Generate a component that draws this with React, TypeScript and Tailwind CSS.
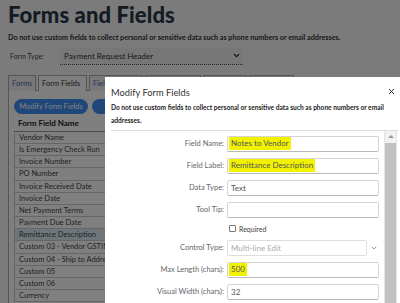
import React from 'react';
import { X, ChevronDown } from 'lucide-react';

const rows = [
  'Vendor Name',
  'Is Emergency Check Run',
  'Invoice Number',
  'PO Number',
  'Invoice Received Date',
  'Invoice Date',
  'Net Payment Terms',
  'Payment Due Date',
  'Remittance Description',
  'Custom 03 - Vendor GSTIN',
  'Custom 04 - Ship to Address',
  'Custom 05',
  'Custom 06',
  'Currency',
];

const tabs = [
  { name: 'Forms', w: 'w-[28px]' },
  { name: 'Form Fields', w: 'w-[49px]' },
  { name: 'Field Values', w: 'w-[54px]' },
  { name: 'Form Field Groups', w: 'w-[56px]' },
  { name: 'Audit Rules', w: 'w-[44px]' },
  { name: 'Forms Audit', w: 'w-[45px]' },
];

const Field: React.FC<{ label: string; value?: string; mark?: boolean }> = ({ label, value, mark }) => (
  <div className="flex items-center h-[16px]">
    <div className="w-[122px] pr-[3px] text-right text-[7.5px] text-[#666]">{label}</div>
    <div className="w-[152px] h-[16px] flex items-center px-[1px] border border-[#d4d4d4] border-b-[#b8b8b8] rounded-[2px] text-[8px] text-[#555]">
      {value && (
        <span className={mark ? 'bg-[#f2f200] px-[2px] h-[13px] leading-[13px]' : 'px-[2px]'}>{value}</span>
      )}
    </div>
  </div>
);

export default function App() {
  return (
    <div className="relative w-[400px] h-[303px] overflow-hidden bg-[#f6f6f6] font-['Lato',sans-serif]">
      <div className="px-[8px] pt-[1px]">
        <h1 className="text-[22px] font-black text-[#2b3648] tracking-[0.1px] leading-[28px]">Forms and Fields</h1>
        <p className="mt-[4px] text-[7.2px] font-bold text-[#333]">
          Do not use custom fields to collect personal or sensitive data such as phone numbers or email addresses.
        </p>
        <div className="flex items-center mt-[4px] pl-[2px]">
          <span className="w-[50px] text-[7px] text-[#444]">Form Type:</span>
          <div className="relative w-[183px] h-[17px] bg-[#eeeeee] flex items-center pl-[4px] text-[8px] text-[#333] border-b border-dotted border-[#555]">
            Payment Request Header
            <ChevronDown className="absolute right-[2px] w-[9px] h-[9px] text-[#111]" strokeWidth={3} />
          </div>
        </div>
        <div className="flex gap-[2px] mt-[10px]">
          {tabs.map((t, i) => (
            <div
              key={t.name}
              className={`${t.w} h-[16px] border border-[#aaa] border-b-0 flex items-center px-[3px] text-[7.5px] overflow-hidden whitespace-nowrap ${
                i === 1 ? 'bg-white text-[#333]' : 'bg-[#f0f0f0] text-[#3d6fb4]'
              }`}
            >
              {t.name}
            </div>
          ))}
        </div>
        <div className="border border-[#aaa] bg-white -mt-[1px] pt-[8px] pl-[5px] h-[220px]">
          <div className="flex gap-[4px]">
            <button className="w-[74px] h-[15px] rounded-full bg-[#3f8ff5] text-white text-[7.5px]">Modify Form Fields</button>
            <button className="w-[60px] h-[15px] rounded-full bg-[#3f8ff5] text-white text-[7.5px]">Preview</button>
          </div>
          <div className="mt-[2px] w-[120px]">
            <div className="pl-[4px] h-[16px] flex items-center text-[8px] font-bold text-[#222] border-b border-[#999]">Form Field Name</div>
            {rows.map(r => (
              <div
                key={r}
                className={`pl-[4px] h-[12.2px] flex items-center text-[7.5px] text-[#444] border-b border-l border-[#ccc] whitespace-nowrap ${
                  r === 'Remittance Description' ? 'bg-[#dcecf5]' : ''
                }`}
              >
                {r}
              </div>
            ))}
          </div>
        </div>
      </div>

      <div className="absolute inset-0 bg-black/50" />

      <div className="absolute left-[105px] top-[77px] w-[300px] h-[240px] bg-white">
        <div className="relative px-[6px]">
          <div className="pt-[9px] text-[9.3px] text-[#333]">Modify Form Fields</div>
          <X className="absolute right-[9px] top-[10px] w-[9px] h-[9px] text-[#222]" strokeWidth={2.5} />
          <p className="mt-[1px] text-[6.6px] font-bold text-[#222] leading-[13px] w-[276px]">
            Do not use custom fields to collect personal or sensitive data such as phone numbers or email addresses.
          </p>
          <div className="mt-[3px] border-t border-[#ddd] w-[287px]" />
        </div>
        <div className="flex">
          <div className="w-[279px] pt-[5px] flex flex-col gap-[6px]">
            <Field label="Field Name:" value="Notes to Vendor" mark />
            <Field label="Field Label:" value="Remittance Description" mark />
            <Field label="Data Type:" value="Text" />
            <Field label="Tool Tip:" />
            <div className="flex items-center h-[10px] pl-[124px] gap-[3px]">
              <div className="w-[7px] h-[7px] border border-[#777] rounded-[1px]" />
              <span className="text-[7px] text-[#444]">Required</span>
            </div>
            <div className="flex items-center h-[16px]">
              <div className="w-[122px] pr-[3px] text-right text-[7.5px] text-[#666]">Control Type:</div>
              <div className="w-[140px] h-[16px] flex items-center pl-[3px] border border-[#ddd] rounded-[2px] text-[8px] text-[#aaa]">
                Multi-line Edit
              </div>
              <ChevronDown className="ml-[3px] w-[8px] h-[8px] text-[#666]" strokeWidth={2} />
            </div>
            <Field label="Max Length (chars):" value="500" mark />
            <Field label="Visual Width (chars):" value="32" />
          </div>
          <div className="w-[13px] mt-[-1px] h-[180px] border border-[#e2e2e2] flex flex-col">
            <div className="h-[12px] bg-[#f2f2f2] flex items-center justify-center">
              <div className="w-0 h-0 border-l-[3px] border-r-[3px] border-b-[3px] border-l-transparent border-r-transparent border-b-[#999]" />
            </div>
            <div className="flex-1 bg-[#c1c1c1]" />
          </div>
        </div>
      </div>
    </div>
  );
}
